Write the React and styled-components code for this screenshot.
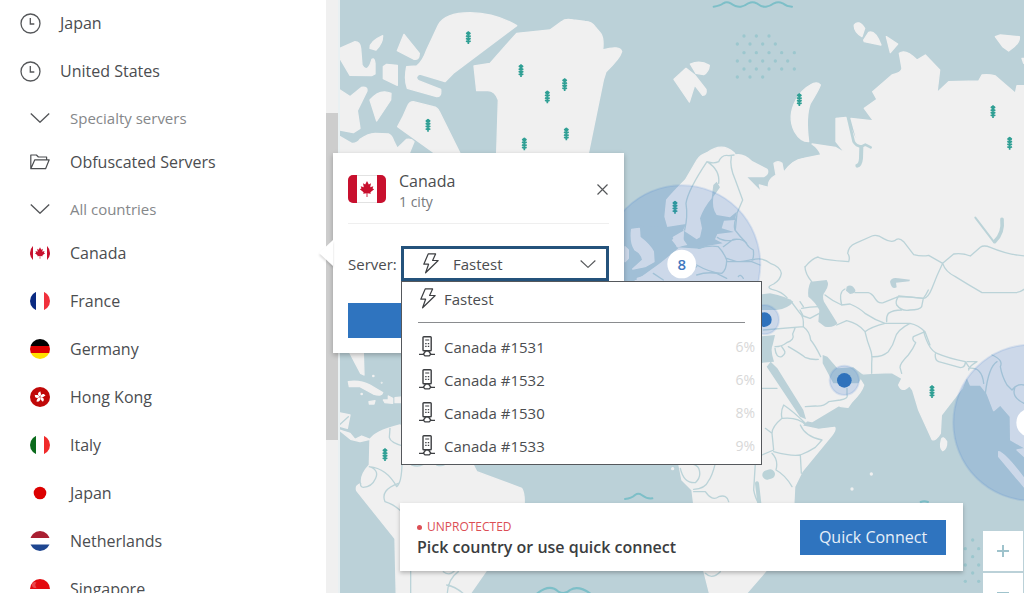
import React, { useState } from 'react'
import styled, { createGlobalStyle } from 'styled-components'


const GlobalStyle = createGlobalStyle`
    *{
        box-sizing: border-box;
    }

    body{
        margin: 0;
        background: #fff;
        color: #4b4d50;
        font-family: 'Open Sans', 'Noto Sans', sans-serif;
        font-size: 16px;
        line-height: 20px;
    }

    button, select{
        font: inherit;
        color: inherit;
    }

    ul{
        list-style: none;
        margin: 0;
        padding: 0;
    }
`;

const recents = ['Japan', 'United States']

const countries = ['Canada', 'France', 'Germany', 'Hong Kong', 'Italy', 'Japan', 'Netherlands', 'Singapore']

const servers = [
    { name: 'Canada #1531', load: '6%' },
    { name: 'Canada #1532', load: '6%' },
    { name: 'Canada #1530', load: '8%' },
    { name: 'Canada #1533', load: '9%' },
]

/* icons */

function ClockIcon() {
    return (
        <svg width="21" height="21" viewBox="0 0 21 21" fill="none" stroke="#55575a" strokeWidth="1.3" aria-hidden="true">
            <circle cx="10.5" cy="10.5" r="9.5" />
            <path d="M10.3 5v6h4" />
        </svg>
    )
}

function ChevronIcon({ width = 20 }) {
    return (
        <svg width={width} height={width / 2} viewBox="0 0 20 10" fill="none" stroke="#55575a" strokeWidth="1.4" aria-hidden="true">
            <path d="M.8.6 10 9.2 19.2.6" />
        </svg>
    )
}

function FolderIcon() {
    return (
        <svg width="20" height="16" viewBox="0 0 20 16" fill="none" stroke="#4b4d50" strokeWidth="1.2" strokeLinejoin="round" aria-hidden="true">
            <path d="M.8 14.7V1h5.600l2 2h8.200v2.800M.8 14.700l4-8.900h14.400l-3.600 8.900z" />
        </svg>
    )
}

function BoltIcon() {
    return (
        <svg width="18" height="21" viewBox="0 0 18 21" fill="none" stroke="#3d3f42" strokeWidth="1.2" strokeLinejoin="round" aria-hidden="true">
            <path d="M6.200.9h7.400l-3 6.600h5.600L3.600 19.800l3-8.600H1.800z" />
        </svg>
    )
}

function ServerIcon() {
    return (
        <svg width="16" height="21" viewBox="0 0 16 21" fill="none" stroke="#3d3f42" strokeWidth="1.400" aria-hidden="true">
            <rect x="4" y=".8" width="8.200" height="14" rx=".8" />
            <path d="M6.200 4h4M6.200 7.600h1.400M8.800 7.600h1.400M6.200 10.400h1.400M8.800 10.400h1.400M0 18.400h16" strokeWidth="1.200" />
            <path d="M6.600 15h3l2.200 3.200-1.600 1.700H6l-1.600-1.700z" fill="#fff" />
        </svg>
    )
}

function CloseIcon() {
    return (
        <svg width="11" height="11" viewBox="0 0 11 11" stroke="#55575a" strokeWidth="1.2" aria-hidden="true">
            <path d="M.5.5l10 10M10.5.5l-10 10" />
        </svg>
    )
}

const leaf = 'M0-9-2-5-4.400-6.500-3.600-2-7-3-6.200-.5-8 .4-3.800 3.600-4.200 5.200-.5 4.600-.5 9H.5L.5 4.600 4.200 5.200 3.800 3.600 8 .4 6.200-.5 7-3 3.600-2 4.400-6.500 2-5z'

const flags = {
    Canada: (
        <>
            <path fill="#c8102e" d="M0 0h3v20H0zM17 0h3v20h-3z" />
            <path fill="#c8102e" transform="translate(10 10) scale(.64)" d={leaf} />
        </>
    ),
    France: (
        <>
            <path fill="#0a2a82" d="M0 0h6v20H0z" />
            <path fill="#f0303c" d="M14 0h6v20h-6z" />
        </>
    ),
    Germany: (
        <>
            <path fill="#000" d="M0 0h20v7H0z" />
            <path fill="#dd0000" d="M0 7h20v7H0z" />
            <path fill="#ffe000" d="M0 14h20v6H0z" />
        </>
    ),
    'Hong Kong': (
        <>
            <path fill="#c00808" d="M0 0h20v20H0z" />
            {[0, 72, 144, 216, 288].map((angle) => (
                <path key={angle} fill="#fff" transform={`translate(10 10) rotate(${angle})`} d="M0-.4C-3-2-2.400-5.200.6-5.600 0-4 2.200-3.400 0-.4z" />
            ))}
        </>
    ),
    Italy: (
        <>
            <path fill="#0b6b1c" d="M0 0h6v20H0z" />
            <path fill="#f02a2a" d="M14 0h6v20h-6z" />
        </>
    ),
    Japan: <circle cx="10" cy="10" r="6.300" fill="#dc0000" />,
    Netherlands: (
        <>
            <path fill="#a91f32" d="M0 0h20v7H0z" />
            <path fill="#1e4690" d="M0 13.500h20V20H0z" />
        </>
    ),
    Singapore: (
        <>
            <path fill="#e30a0f" d="M0 0h20v10H0z" />
            <path fill="#fff" d="M6.500 3.500a3 3 0 1 0 0 5 3.600 3.600 0 0 1 0-5z" opacity=".25" />
        </>
    ),
}

function RoundFlag({ country }) {
    const id = `round-${country.replace(' ', '-')}`
    return (
        <svg width="20" height="20" viewBox="0 0 20 20" aria-hidden="true">
            <clipPath id={id}>
                <circle cx="10" cy="10" r="10" />
            </clipPath>
            <g clipPath={`url(#${id})`}>
                <path fill="#fff" d="M0 0h20v20H0z" />
                {flags[country]}
            </g>
        </svg>
    )
}

function CanadaFlag() {
    return (
        <svg width="38" height="28" viewBox="0 0 38 28" aria-hidden="true">
            <clipPath id="canada-card">
                <rect width="38" height="28" rx="5" />
            </clipPath>
            <rect x=".5" y=".5" width="37" height="27" rx="5" fill="#fff" stroke="#e2e2e2" />
            <g clipPath="url(#canada-card)" fill="#c8102e">
                <path d="M0 0h9v28H0zM29 0h9v28h-9z" />
                <path transform="translate(19 14) scale(.9)" d={leaf} />
            </g>
        </svg>
    )
}

/* map, drawn at three units to the pixel */

const trees = [
    [1405, 112], [1563, 211], [1694, 253], [1642, 290], [1699, 401], [1573, 431], [1284, 375], [1155, 1363],
    [2398, 298], [2979, 334], [3029, 429], [2025, 621], [2796, 1174],
]

const dots = [
    [216, 108], [253, 108], [291, 108], [196, 132], [234, 132], [272, 132], [310, 132], [216, 158], [253, 158],
    [291, 158], [329, 158], [367, 158], [196, 183], [234, 183], [272, 183], [310, 183], [347, 183], [216, 207],
    [253, 207], [291, 207], [329, 207], [367, 207], [196, 231], [234, 231], [272, 231],
    [902, 1620], [880, 1646], [920, 1646], [902, 1670], [880, 1695], [920, 1695], [902, 1719], [880, 1744], [920, 1744],
]

function WorldMap() {
    return (
        <MapDrawing viewBox="1020 0 2052 1779" preserveAspectRatio="xMinYMin slice" aria-hidden="true">
            {/* arctic islands and Greenland */}
            <g className="land" transform="translate(960 0)">
                <path d="M320 150 355 75Q375 38 450 38 530 40 590 77L400 220 375 245 300 222Q282 230 295 242L362 268Q365 290 350 290L262 265Q252 240 260 200L290 198Q308 185 320 150Z" />
                <path d="M462 198 510 190 590 100 690 90 725 65Q735 55 760 60L795 64Q815 65 825 80L842 100Q852 115 848 150 900 135 905 155 900 175 858 215L850 240 805 460H530L535 300Q525 270 500 272L470 272Z" />
                <path d="M60 145 105 125Q120 125 122 145L126 195Q140 220 152 190L156 178Q163 172 165 190V222L155 227 90 226 60 175Z" />
                <path d="M150 145Q148 125 188 107 188 130 168 150Z" />
                <path d="M252 103 298 160Q298 182 280 177L232 152Z" />
                <path d="M200 193 232 196V256L190 236V200Z" />
                <path d="M60 270 90 290 125 262Q145 260 140 275L112 332 120 385 100 398 60 390Z" />
                <path d="M150 300Q180 265 213 280L212 300 170 363Z" />
                <path d="M280 305 340 320Q352 322 358 335L420 460H345L233 380Q250 350 262 320 268 305 280 305Z" />
                <path d="M60 410 95 430Q110 432 120 418 145 400 165 400L205 402Q215 405 222 425L232 445 260 418Q275 415 282 425L268 460 440 480V1010H60Z" />
            </g>

            {/* central and south America */}
            <g className="land" transform="translate(990 1050)">
                <path d="M55 0 100 10 102 75 92 70Z" />
                <path d="M55 95Q90 90 120 105L158 128Q155 140 130 132L90 110H58Z" />
                <path d="M117 155 135 152 132 162 118 162ZM160 150 175 150 175 138 188 145 188 160 165 158ZM195 143 225 140V158H195Z" />
                <path d="M28 188 60 195 52 235 28 228ZM28 240 60 250 75 268 95 258 120 268 90 275 62 268Z" />
                <path d="M120 270Q130 245 210 225L430 345 440 365 575 415Q585 430 582 470L470 660 380 790H200L195 566 80 422Q75 405 95 400 90 375 118 345Z" />
                <circle cx="130" cy="78" r="2" />
                <circle cx="95" cy="132" r="2" />
                <circle cx="155" cy="98" r="1" />
                <circle cx="1028" cy="356" r="3" />
            </g>
            <g className="border" transform="translate(990 1050)">
                <path d="M180 235 178 262Q180 278 225 290M118 350Q170 355 200 410 215 400 216 340M118 350Q148 360 137 385 125 412 100 412 90 410 92 400M205 400Q150 420 165 455 190 462 215 485M28 225 55 200M242 640V740M340 665Q360 680 375 660M350 705Q380 710 410 740M385 665Q350 690 352 740M245 345Q265 352 280 343M320 345Q335 350 345 343" />
            </g>

            {/* Eurasia and Africa */}
            <g className="land" transform="translate(2016 0)">
                <path d="M-21 650-16 600Q0 580 40 540L75 480Q85 465 105 458 150 425 186 458L190 465Q215 460 240 485L285 508Q292 520 275 530L222 530 268 577 262 555 290 562Q285 540 312 525L306 490Q318 480 330 490L335 517Q360 480 395 475L447 465Q440 445 420 432L490 442 520 460 492 425V355L522 352 560 440 537 355 605 363 577 325 615 298 602 275 660 225Q690 218 690 205L682 160Q700 145 735 180L760 165 803 210 795 278 830 245 920 243 930 225Q950 222 970 228L1030 280 1035 257H1090V1345H1060L1016 1320 1015 1250 985 1215 965 1232 945 1180 925 1155H895L885 1130 870 1165 808 1245 805 1300Q790 1325 780 1318L740 1230 722 1170 712 1157Q690 1180 680 1155L690 1135 660 1118 598 1120 555 1123 575 1155Q570 1175 540 1205L528 1222 508 1220 500 1217 420 1265 405 1262 390 1278 440 1288 488 1282Q492 1290 480 1305L390 1415 368 1460 365 1520 360 1620 280 1715 215 1790H115L95 1710 65 1510 60 1470 30 1440 20 1390H-110V820L-45 795 0 750-11 685Z" />
                <path d="M547 75Q560 58 578 85L570 110Q545 95 547 75ZM575 120 590 97Q610 90 627 135L577 125ZM643 110 677 132 655 158ZM970 110 985 105 1042 110Q1045 130 1010 153L992 140ZM1050 175H1090V190H1055Z" />
                <path d="M6 238 42 205 68 225 102 268Q105 285 92 286L68 255 52 306ZM55 192Q85 180 112 196 110 215 95 224L72 220Z" />
                <path d="M445 255Q440 270 415 310 400 350 410 425 385 425 368 395 345 350 372 300 390 268 415 255 435 242 445 255Z" />
                <path d="M808 1320Q812 1305 824 1325 825 1345 812 1352 802 1345 808 1320Z" />
                <path d="M980 1355Q1000 1360 1060 1440L1090 1470V1500Q1030 1430 980 1370ZM1035 1350 1090 1340V1400Z" />
                <circle cx="598" cy="1422" r="3" />
                <circle cx="540" cy="1467" r="3" />
            </g>

            {/* inland seas, lakes and gulfs */}
            <g className="sea" transform="translate(1800 450)">
                <path d="M350 95 360 112 340 140Q335 175 350 195L390 202 410 185 405 210 372 212 365 235 402 246 352 252 345 268 368 280 320 288 300 296 230 292 262 285 250 268 240 235 290 268 300 262 306 235 300 205Q310 175 335 145L340 105Z" />
                <path d="M195 232 258 222 245 250 215 270 235 295 180 340 110 390H75V225Z" />
            </g>
            <g className="land" transform="translate(1800 450)">
                <path d="M95 238 118 235 120 262Q150 285 160 305L162 335 135 350 98 357 128 330Q125 310 105 300 90 280 95 238ZM75 290 85 300 85 325 75 335Z" />
                <path d="M220 262 250 245 248 285 232 290ZM112 385 150 374 160 362 210 345 240 385V395H112Z" />
            </g>
            <g className="sea" transform="translate(2250 690)">
                <path d="M182 155 230 150Q240 165 225 185 215 195 222 215L262 280Q250 295 225 290L205 275 208 240Q195 215 175 200 172 175 182 155Z" />
                <path d="M20 195 60 190Q110 200 130 215 115 235 80 240L20 240ZM20 320 75 315 68 345Q60 360 72 395L20 400Z" />
                <path d="M290 170Q305 160 316 180 318 190 300 192L288 182ZM420 155Q425 140 445 145L480 149 478 154 438 158 440 172Q425 180 420 155Z" />
                <path d="M218 375 232 380 262 415 310 412 340 435 325 460 250 460 218 400ZM62 395 82 415 160 540 168 568 150 560 50 410Z" />
            </g>
            <g className="inlet" transform="translate(2016 0)">
                <path strokeWidth="8" d="M528 352 545 425Q552 438 568 440L580 434 596 442" />
                <path strokeWidth="12" d="M568 442 567 475Q565 495 556 497" />
                <path strokeWidth="6" d="M910 653 965 725" />
                <path strokeWidth="11" d="M990 658Q995 700 968 725" />
                <path strokeWidth="12" d="M255 1450 262 1510" />
                <path strokeWidth="28" d="M285 1425 295 1422" />
            </g>

            {/* borders */}
            <g className="border" transform="translate(2016 0)">
                <path d="M38 690Q48 650 42 610 48 570 105 485 125 492 140 485 150 462 170 467L186 465M105 485Q145 510 140 550M178 470Q172 500 190 540L212 600 195 640 190 690" />
                <path d="M240 780Q270 770 295 790 325 800 328 820 325 840 305 852 280 862 300 868 330 875 345 893M400 800Q420 775 438 771 450 780 530 785 535 770 527 760 530 738 550 730L600 708Q615 702 635 716 655 728 668 722 680 710 695 725L725 764Q750 770 770 766L812 790 845 762Q870 758 895 768L925 742Q935 734 955 742 1010 765 1060 768M812 790Q795 825 780 865 768 895 755 895L680 888M812 790Q820 815 850 830 890 855 930 878H1030Q1045 878 1060 865" />
            </g>
            <g className="border" transform="translate(1800 450)">
                <path d="M295 295Q330 285 355 290 370 305 380 330 380 360 365 370 330 368 290 345M370 290 400 268Q430 265 440 282 445 292 460 300 462 320 458 328 430 335 410 335L380 325M352 262Q375 278 408 268M408 205Q400 225 405 240 420 260 440 280M380 335H455L480 345M290 375Q320 365 350 370L380 385M290 350 235 380M160 370 190 390M415 380Q420 370 430 385" />
            </g>
            <g className="border" transform="translate(2250 690)">
                <path d="M165 110Q165 130 185 155M225 195Q250 215 275 225L300 222Q330 235 345 250 375 270 405 280 365 290 345 305 325 280 290 272L260 285M275 225Q265 185 285 177M315 188 355 188Q365 190 375 205 385 222 400 218L445 200Q485 200 520 205 528 195 535 180M445 200Q435 215 440 225 455 245 480 240 510 240 515 230L520 205M455 240Q430 240 415 250 408 260 410 275M405 280 480 280Q505 285 525 305L540 345M345 305Q352 335 360 355 368 375 365 400V430M365 380Q395 382 415 365 430 345 435 325 440 300 480 280M525 305 490 320Q485 330 497 338 490 355 475 375 450 400 450 412L455 430M40 300 160 290Q162 260 150 250L120 210M160 290Q180 305 182 330 195 345 212 380M75 350Q95 350 110 338 135 330 128 312L135 295M115 350Q150 370 165 382 185 390 205 388M75 355Q78 385 95 380 110 370 102 360L95 350M155 235Q180 230 205 230M208 250 180 265 160 258 150 240M150 215 160 230" />
            </g>
            <g className="border" transform="translate(2016 870)">
                <path d="M270 295H315M525 295V315Q530 325 505 330M505 330 470 335Q455 350 430 348L400 350M755 125Q770 180 795 190 830 205 880 215L890 230M790 192Q788 210 800 215L865 233Q880 232 880 215M885 215H915Q890 230 890 240M890 235Q930 230 935 280M940 310Q950 230 975 215M960 195Q995 210 985 230 990 260 1005 285L1020 300Q1035 280 1056 285M1030 290Q1015 320 1056 340M400 405Q380 380 330 385 325 365 335 345 365 365 400 400M330 385Q300 410 300 430L305 480 270 495M300 430 280 415M305 485Q360 500 385 495 410 485 430 472L450 450Q400 440 385 405M385 495 388 550M300 490Q320 510 312 540 340 555 360 590M250 520 245 600Q250 625 260 640M130 520Q120 560 108 575 100 595 65 598M25 535Q35 580 70 578 90 560 80 535 75 525 60 522M65 605H100Q120 635 140 620 165 612 170 635M100 850Q120 870 145 845" />
            </g>

            {/* sea marks */}
            <g className="wave">
                <path d="M2141 20Q2160 18 2170 10 2180 3 2192 10 2210 22 2222 20 2235 18 2245 10 2258 3 2270 10 2285 22 2298 20 2312 18 2322 10 2335 3 2348 10 2360 20 2376 20" />
                <path d="M1875 1497Q1895 1495 1905 1485 1915 1478 1925 1485 1940 1497 1957 1495M1612 1780Q1650 1750 1675 1775 1695 1785 1710 1770 1735 1755 1770 1780M2762 1506Q2772 1502 2784 1506" />
            </g>
            <g fill="#9cc7ce" transform="translate(2016 0)">
                {dots.map(([x, y]) => <circle key={`${x}-${y}`} cx={x} cy={y} r="5" />)}
            </g>
            <g fill="none" stroke="#2f9f94" strokeWidth="5" strokeLinejoin="round">
                {trees.map(([x, y]) => (
                    <path key={x} transform={`translate(${x} ${y})`} d="M0-18V20M-5-12 0-16 5-12 0-8ZM-7-5 0-1 7-5M-7 3 0 7 7 3M-7 11 0 14 7 11" />
                ))}
            </g>

            {/* clusters and pins */}
            <g className="cluster">
                <circle cx="2045" cy="792" r="236" />
                <circle cx="3094" cy="1268" r="234" />
                <circle cx="2533" cy="1141" r="44" />
                <circle cx="2293" cy="959" r="44" />
            </g>
            <g fill="#2f72bc">
                <circle cx="2533" cy="1141" r="22" />
                <circle cx="2293" cy="959" r="22" />
            </g>
            <g fill="#fff">
                <circle cx="2045" cy="792" r="43" />
                <circle cx="3092" cy="1268" r="43" />
            </g>
            <text x="2045" y="809" textAnchor="middle">8</text>
        </MapDrawing>
    )
}

function App() {
    const [server, setServer] = useState('Fastest')

    return (
        <>
            <GlobalStyle />
            <AppStyled>
                <Sidebar>
                    <ul>
                        {recents.map((name) => (
                            <li key={name}>
                                <Row $recent><ClockIcon />{name}</Row>
                            </li>
                        ))}
                        <li>
                            <SectionRow><ChevronIcon />Specialty servers</SectionRow>
                        </li>
                        <li>
                            <Row><FolderIcon />Obfuscated Servers</Row>
                        </li>
                        <li>
                            <SectionRow><ChevronIcon />All countries</SectionRow>
                        </li>
                        {countries.map((name) => (
                            <li key={name}>
                                <Row><RoundFlag country={name} />{name}</Row>
                            </li>
                        ))}
                    </ul>
                </Sidebar>
                <ScrollTrack><div /></ScrollTrack>

                <MapArea>
                    <WorldMap />

                    <CountryCard>
                        <CardHeader>
                            <CanadaFlag />
                            <div>
                                <h2>Canada</h2>
                                <p>1 city</p>
                            </div>
                            <CloseButton aria-label="Close"><CloseIcon /></CloseButton>
                        </CardHeader>
                        <ServerField>
                            <label htmlFor="server">Server:</label>
                            <SelectBox>
                                <BoltIcon />
                                <select id="server" value={server} onChange={(e) => setServer(e.target.value)}>
                                    <option>Fastest</option>
                                    {servers.map(({ name }) => <option key={name}>{name}</option>)}
                                </select>
                                <ChevronIcon width={16} />
                                <ServerMenu>
                                    <li>
                                        <ServerOption onClick={() => setServer('Fastest')}><BoltIcon />Fastest</ServerOption>
                                    </li>
                                    <Divider />
                                    {servers.map(({ name, load }) => (
                                        <li key={name}>
                                            <ServerOption onClick={() => setServer(name)}>
                                                <ServerIcon />{name}<span>{load}</span>
                                            </ServerOption>
                                        </li>
                                    ))}
                                </ServerMenu>
                            </SelectBox>
                        </ServerField>
                        <ConnectButton aria-label="Connect" />
                    </CountryCard>

                    <StatusBar>
                        <div>
                            <Status>UNPROTECTED</Status>
                            <h1>Pick country or use quick connect</h1>
                        </div>
                        <QuickConnect>Quick Connect</QuickConnect>
                    </StatusBar>

                    <ZoomControls>
                        <button aria-label="Zoom in">
                            <svg width="12" height="12" viewBox="0 0 12 12" stroke="#9fc3cc" strokeWidth="2"><path d="M6 0v12M0 6h12" /></svg>
                        </button>
                        <button aria-label="Zoom out">
                            <svg width="12" height="12" viewBox="0 0 12 12" stroke="#9fc3cc" strokeWidth="2"><path d="M0 6h12" /></svg>
                        </button>
                    </ZoomControls>
                </MapArea>
            </AppStyled>
        </>
    )
}

const AppStyled = styled.main`
    display: flex;
    height: 100vh;
    overflow: hidden;
`;

const Sidebar = styled.nav`
    flex: 0 0 326px;
    overflow: hidden;

    ul{
        margin-top: -1px;
    }
`;

const Row = styled.button`
    display: grid;
    grid-template-columns: 20px 1fr;
    align-items: center;
    column-gap: 20px;
    width: 100%;
    height: 48px;
    padding: 0 0 0 ${({ $recent }) => ($recent ? '20px' : '30px')};
    border: 0;
    background: none;
    text-align: left;
    cursor: pointer;
`;

const SectionRow = styled(Row)`
    height: 43px;
    padding-top: 2px;
    color: #85878a;
    font-size: 15px;
`;

const ScrollTrack = styled.div`
    flex: 0 0 14px;
    padding-top: 113px;
    background: #f0f0f0;
    border-right: 2px solid #e9f0f2;

    div{
        height: 327px;
        background: #cdcdcd;
    }
`;

const MapArea = styled.section`
    position: relative;
    flex: 1;
    background: #bbd1d8;
`;

const MapDrawing = styled.svg`
    position: absolute;
    inset: 0;
    width: 100%;
    height: 100%;

    .land{
        fill: #f0f0f0;
        stroke: #f0f0f0;
        stroke-width: 4;
        stroke-linejoin: round;
    }

    .sea{
        fill: #bbd1d8;
    }

    .border, .inlet, .wave{
        fill: none;
        stroke: #bbd3d8;
        stroke-linecap: round;
        stroke-linejoin: round;
    }

    .border{
        stroke-width: 4;
    }

    .wave{
        stroke: #7dbfc8;
        stroke-width: 6;
    }

    .cluster{
        fill: rgba(46, 113, 205, 0.18);
        stroke: rgba(46, 113, 205, 0.12);
        stroke-width: 6;
    }

    text{
        fill: #3f78bf;
        font-size: 45px;
        font-weight: 600;
    }
`;

const CountryCard = styled.section`
    position: absolute;
    top: 153px;
    left: -7px;
    width: 291px;
    padding: 12px 15px 15px;
    background: #fff;
    box-shadow: 0 2px 5px rgba(0, 0, 0, 0.25);

    &::before{
        content: '';
        position: absolute;
        top: 87px;
        left: -14px;
        border: solid transparent;
        border-width: 13px 14px 13px 0;
        border-right-color: #fff;
        filter: drop-shadow(0 2px 1px rgba(0, 0, 0, 0.15));
    }
`;

const CardHeader = styled.header`
    display: flex;
    align-items: center;
    gap: 13px;
    height: 59px;
    padding-bottom: 10px;
    border-bottom: 1px solid #efefef;

    div{
        padding-top: 3px;
    }

    h2{
        margin: 0;
        font-size: 16px;
        font-weight: 400;
        line-height: 22px;
    }

    p{
        margin: 0;
        color: #77797c;
        font-size: 14px;
        line-height: 20px;
    }
`;

const CloseButton = styled.button`
    display: flex;
    margin-left: auto;
    padding: 0 1px;
    border: 0;
    background: none;
    cursor: pointer;
`;

const ServerField = styled.div`
    display: flex;
    align-items: center;
    margin: 22px 0;
    font-size: 15px;

    label{
        flex: 0 0 53px;
    }
`;

const SelectBox = styled.div`
    position: relative;
    flex: 1;
    display: flex;
    align-items: center;
    height: 35px;
    padding: 0 10px 0 18px;
    border: 3px solid #24527b;

    select{
        flex: 1;
        min-width: 0;
        margin-left: 13px;
        padding: 0;
        border: 0;
        outline: 0;
        background: none;
        appearance: none;
    }
`;

const ServerMenu = styled.ul`
    position: absolute;
    z-index: 1;
    top: 32px;
    left: -3px;
    width: 361px;
    padding-bottom: 2px;
    background: #fff;
    border: 1px solid #55585c;
`;

const ServerOption = styled.button`
    display: grid;
    grid-template-columns: 18px 1fr auto;
    align-items: center;
    column-gap: 7px;
    width: 100%;
    height: 33px;
    padding: 0 6px 0 17px;
    border: 0;
    background: none;
    text-align: left;
    cursor: pointer;

    span{
        color: #d8d8d8;
        font-size: 14px;
    }
`;

const Divider = styled.li`
    height: 1px;
    margin: 7px 16px;
    background: #8a8c8f;
`;

const ConnectButton = styled.button`
    display: block;
    width: 100%;
    height: 35px;
    border: 0;
    background: #2f74bf;
`;

const StatusBar = styled.section`
    position: absolute;
    left: 60px;
    right: 61px;
    bottom: 22px;
    display: flex;
    align-items: center;
    justify-content: space-between;
    height: 68px;
    padding: 0 17px;
    background: #fff;
    box-shadow: 0 2px 4px rgba(0, 0, 0, 0.25);

    h1{
        margin: 0;
        color: #3b3d40;
        font-size: 16px;
        font-weight: 600;
        line-height: 20px;
    }
`;

const Status = styled.p`
    display: flex;
    align-items: center;
    gap: 5px;
    margin: 0;
    color: #dc4e55;
    font-size: 12px;
    line-height: 20px;

    &::before{
        content: '';
        width: 5px;
        height: 5px;
        border-radius: 50%;
        background: #dc4e55;
    }
`;

const QuickConnect = styled.button`
    width: 146px;
    height: 35px;
    padding: 0;
    border: 0;
    background: #2f74bf;
    color: #e6eff9;
    cursor: pointer;
`;

const ZoomControls = styled.div`
    position: absolute;
    top: 531px;
    right: 1px;
    display: grid;
    gap: 2px;

    button{
        display: flex;
        align-items: center;
        justify-content: center;
        width: 40px;
        height: 40px;
        padding: 0;
        border: 0;
        background: #fff;
        cursor: pointer;
    }
`;

export default App
